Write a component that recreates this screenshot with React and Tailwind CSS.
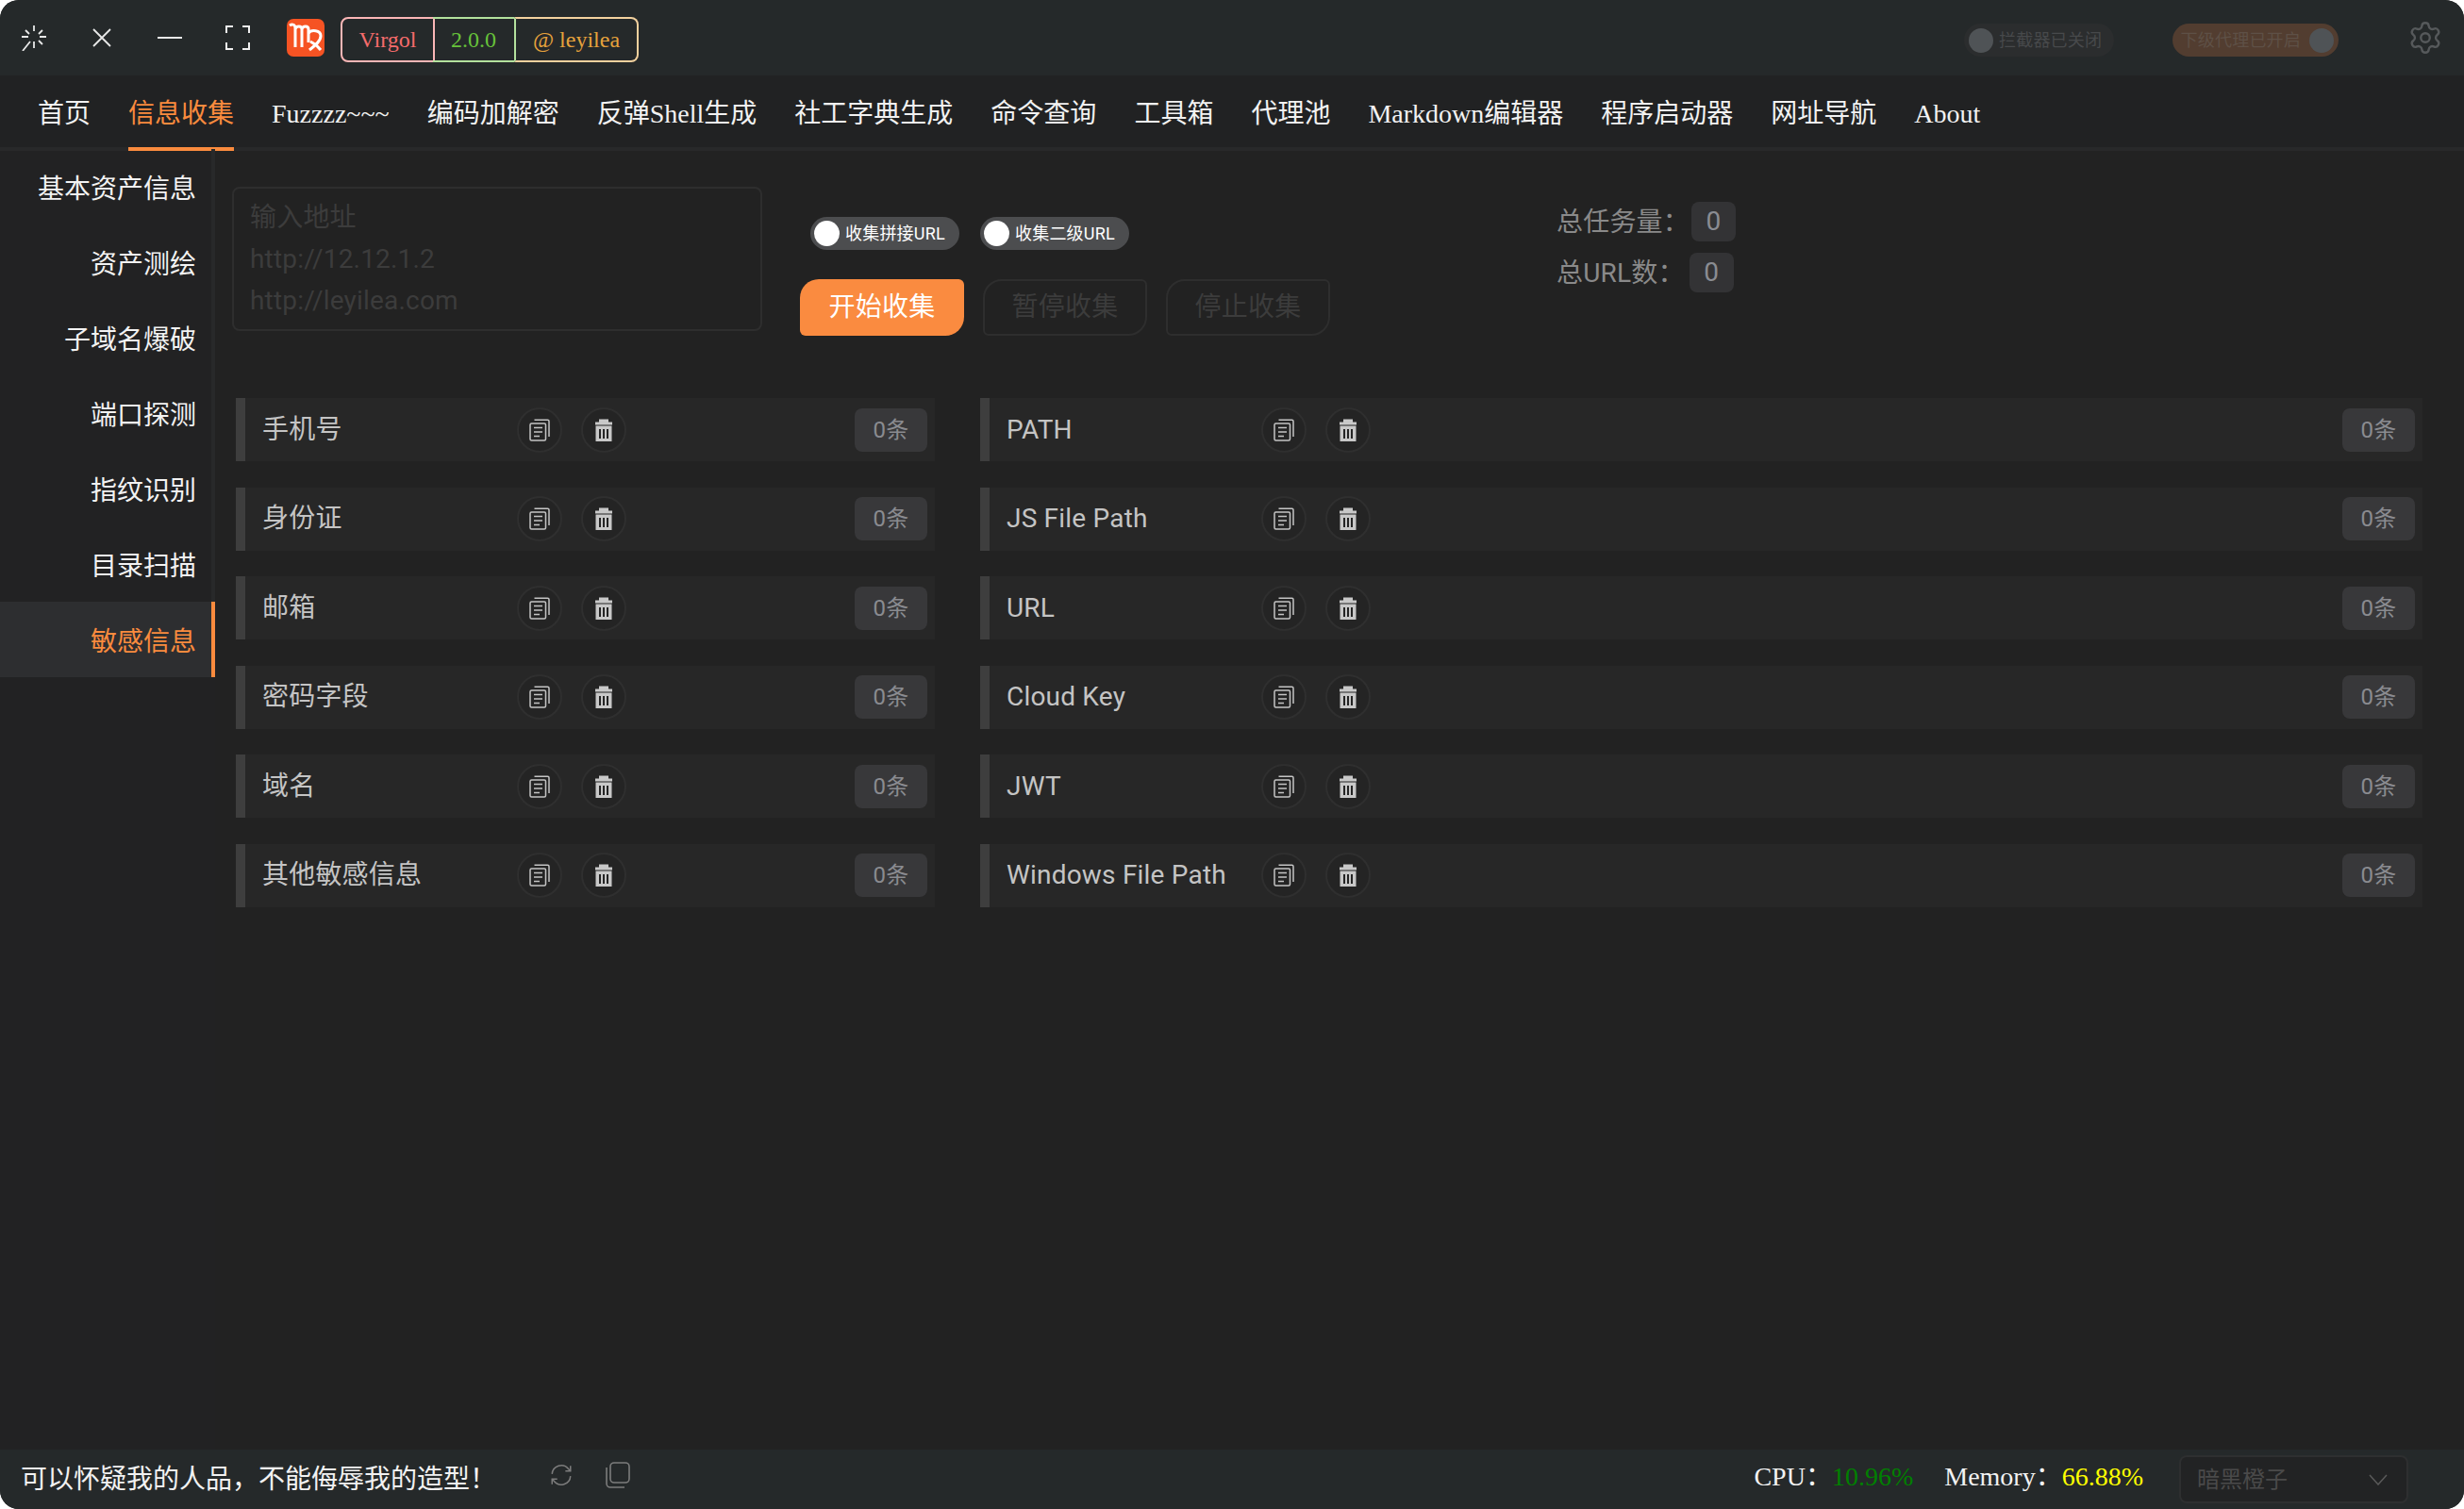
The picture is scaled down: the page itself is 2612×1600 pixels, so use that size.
import { Settings } from 'lucide-react';

const SERIF = "font-['Liberation_Serif','Noto_Sans_CJK_SC',serif]";

const tabs = ['首页', '信息收集', 'Fuzzzz~~~', '编码加解密', '反弹Shell生成', '社工字典生成', '命令查询', '工具箱', '代理池', 'Markdown编辑器', '程序启动器', '网址导航', 'About'];
const sideItems = ['基本资产信息', '资产测绘', '子域名爆破', '端口探测', '指纹识别', '目录扫描', '敏感信息'];
const leftRows = ['手机号', '身份证', '邮箱', '密码字段', '域名', '其他敏感信息'];
const rightRows = ['PATH', 'JS File Path', 'URL', 'Cloud Key', 'JWT', 'Windows File Path'];

function CopyIcon() {
  return (
    <svg viewBox="0 0 22 24" className="w-[22px] h-[24px]" fill="none" stroke="#c4c4c4" strokeWidth="1.5">
      <rect x="1" y="5" width="16.500" height="18" rx="1.500" />
      <path d="M5.500 1.200h14a1.500 1.500 0 0 1 1.500 1.500V19" />
      <path d="M5 9.500h9M5 14h9M5 18.500h6" />
    </svg>
  );
}

function TrashIcon() {
  return (
    <svg viewBox="0 0 18 24" className="w-[18px] h-[24px]">
      <path fill="#c8c8c8" fillRule="evenodd" d="M4 .5h10v3h4v3H0v-3h4zM.5 7.500h17V24H.5zM4 11v10h2V11zM8 11v10h2V11zM12 11v10h2V11z" />
    </svg>
  );
}

function Row({ label }) {
  return (
    <div className="h-[67px] flex items-center bg-[#272727] border-l-[10px] border-[#3e3e3e]">
      <span className="w-[288px] pl-[18px] text-[28px] leading-none text-[#c4c4c4] whitespace-nowrap">{label}</span>
      <div className="flex gap-5">
        <button className="w-12 h-12 rounded-full border-2 border-[#2f2f2f] bg-[#242424] flex items-center justify-center">
          <CopyIcon />
        </button>
        <button className="w-12 h-12 rounded-full border-2 border-[#2f2f2f] bg-[#242424] flex items-center justify-center">
          <TrashIcon />
        </button>
      </div>
      <span className="ml-auto mr-[8px] w-[77px] h-[46px] rounded-lg bg-[#38383a] text-[#8a8b90] text-[24px] flex items-center justify-center">0条</span>
    </div>
  );
}

function Toggle({ label }) {
  return (
    <div className="h-[35px] w-[158px] rounded-full bg-[#4c4d4f] flex items-center pl-1 gap-[6px]">
      <span className="w-[27px] h-[27px] rounded-full bg-white" />
      <span className="text-white text-[18px] leading-none whitespace-nowrap">{label}</span>
    </div>
  );
}

export default function App() {
  return (
    <div className="bg-white w-[2612px] h-[1600px]">
      <div className="h-full rounded-[20px] overflow-hidden flex flex-col bg-[#222223] tracking-[0.2px] font-['Roboto','Noto_Sans_CJK_SC',sans-serif]">
        {/* Title bar */}
        <header className="h-20 shrink-0 bg-[#25292a] flex items-center">
          <div className="flex items-center pl-[23px]">
            <svg viewBox="0 0 26 27" className="w-[26px] h-[27px]" stroke="#e8e8e8" strokeWidth="1.8" fill="none">
              <path d="M13 0v6M13 17v7M4 5l4 4M22 5l-4 4M0 12h7M19 12h7M18 16l4 4M9 17L1 27" />
            </svg>
            <svg viewBox="0 0 20 20" className="ml-[49px] w-5 h-5" stroke="#e8e8e8" strokeWidth="1.8" fill="none">
              <path d="M1 1l18 18M19 1L1 19" />
            </svg>
            <span className="ml-[49px] w-[26px] h-[2px] bg-[#e8e8e8]" />
            <svg viewBox="0 0 26 26" className="ml-[46px] w-[26px] h-[26px]" stroke="#f0f0f0" strokeWidth="2" fill="none">
              <path d="M1 8V1h7M18 1h7v7M25 18v7h-7M8 25H1v-7" />
            </svg>
          </div>
          <div className="ml-[39px] w-10 h-10 rounded-[7px] bg-[#f65323] flex items-center justify-center">
            <svg viewBox="0 0 40 40" className="w-10 h-10" stroke="#fff" strokeWidth="3" fill="none">
              <path d="M3 7c3-2 6-1 6 3v20M9 11c1-4 7-4 7 0v19M16 11c1-4 7-4 7 0v14" />
              <path d="M23 15c3-4 13-3 13 3 0 6-7 11-12 15M25 24c4 2 8 5 11 9" />
            </svg>
          </div>
          <div className={`ml-[17px] mt-1 h-12 flex text-[24px] tracking-normal ${SERIF}`}>
            <span className="w-[100px] flex items-center justify-center border-2 border-[#fab6b6] rounded-l-lg text-[#f56c6c]">Virgol</span>
            <span className="w-[86px] -ml-[2px] flex items-center justify-center border-y-2 border-[#b3e19d] text-[#67c23a]">2.0.0</span>
            <span className="w-[132px] flex items-center justify-center border-2 border-[#f3d19e] rounded-r-lg text-[#e6a23c] border-l-[#b3e19d]">@ leyilea</span>
          </div>
          <div className="ml-auto flex items-center pr-[22px]">
            <div className="mt-[5px] h-[35px] w-[159px] rounded-full bg-[#2b2d2e] flex items-center pl-[5px] gap-[6px]">
              <span className="w-[26px] h-[26px] rounded-full bg-[#4f5356]" />
              <span className="text-[#47494b] text-[18px] leading-none whitespace-nowrap">拦截器已关闭</span>
            </div>
            <div className="mt-[5px] ml-[62px] h-[35px] w-[176px] rounded-full bg-[#523d30] flex items-center justify-end pr-[5px] gap-[9px]">
              <span className="text-[#5e5046] text-[18px] leading-none whitespace-nowrap">下级代理已开启</span>
              <span className="w-[26px] h-[26px] rounded-full bg-[#4f5356]" />
            </div>
            <Settings className="ml-[73px] w-[38px] h-[38px] text-[#56595b]" strokeWidth={1.5} />
          </div>
        </header>

        {/* Tabs */}
        <nav className={`h-20 shrink-0 flex items-stretch gap-10 pl-10 bg-[#212223] border-b-4 border-[#28292a] text-[28px] tracking-normal text-[#f2f2f2] ${SERIF}`}>
          {tabs.map((tab) => (
            tab === '信息收集' ? (
              <span key={tab} className="flex items-center whitespace-nowrap text-[#fa8b3e] border-b-4 border-[#fa8b3e] -mb-1 pt-[5px]">{tab}</span>
            ) : (
              <span key={tab} className="flex items-center whitespace-nowrap pt-[5px]">{tab}</span>
            )
          ))}
        </nav>

        <div className="flex-1 flex min-h-0">
          {/* Side menu */}
          <aside className={`w-[228px] shrink-0 -mt-[2px] text-[28px] tracking-normal text-[#f2f2f2] ${SERIF}`}>
            {sideItems.map((item) => (
              item === '敏感信息' ? (
                <div key={item} className="h-20 flex items-center justify-end pr-4 pt-[6px] bg-[#2d2e30] border-r-4 border-[#fa8b3e] text-[#fa8b3e]">{item}</div>
              ) : (
                <div key={item} className="h-20 flex items-center justify-end pr-4 pt-[6px] border-r-4 border-[#28292a]">{item}</div>
              )
            ))}
          </aside>

          <main className="flex-1 min-w-0 pl-[18px] pt-[38px] bg-[#222222]">
            <div className="flex items-start">
              <textarea
                readOnly
                placeholder={'输入地址\nhttp://12.12.1.2\nhttp://leyilea.com'}
                className="w-[562px] h-[153px] resize-none rounded-lg border-2 border-[#2e2e2e] bg-transparent px-[17px] py-[9px] text-[28px] leading-[44px] outline-none placeholder:text-[#3c3c3c]"
              />
              <div className="ml-10 w-[562px] pt-8">
                <div className="flex gap-[22px] pl-[11px]">
                  <Toggle label="收集拼接URL" />
                  <Toggle label="收集二级URL" />
                </div>
                <div className="flex gap-5 mt-[31px] text-[28px]">
                  <button className="w-[174px] h-[60px] rounded-tl-[20px] rounded-br-[20px] rounded-tr-md rounded-bl-md bg-[#fa8b40] text-white">开始收集</button>
                  <button className="w-[174px] h-[60px] rounded-tl-[20px] rounded-br-[20px] rounded-tr-md rounded-bl-md border-2 border-[#2e2e2e] text-[#3c3c3c]">暂停收集</button>
                  <button className="w-[174px] h-[60px] rounded-tl-[20px] rounded-br-[20px] rounded-tr-md rounded-bl-md border-2 border-[#2e2e2e] text-[#3c3c3c]">停止收集</button>
                </div>
              </div>
              <div className="ml-[240px] pt-4 flex flex-col gap-3 text-[28px] leading-none text-[#8a8a8a]">
                <div className="h-[42px] flex items-center gap-[2px]">
                  <span className="pt-[2px]">{'总任务量\uFF1A'}</span>
                  <span className="w-[47px] h-[42px] rounded-lg bg-[#333335] text-[#8a8c92] flex items-center justify-center">0</span>
                </div>
                <div className="h-[42px] flex items-center gap-[5px]">
                  <span className="pt-[2px]">{'总URL数\uFF1A'}</span>
                  <span className="w-[47px] h-[42px] rounded-lg bg-[#333335] text-[#8a8c92] flex items-center justify-center">0</span>
                </div>
              </div>
            </div>

            <div className="flex gap-12 pl-[4px] pr-[44px] mt-[66px]">
              <div className="w-[741px] flex flex-col gap-[27.5px]">
                {leftRows.map((r) => <Row key={r} label={r} />)}
              </div>
              <div className="flex-1 flex flex-col gap-[27.5px]">
                {rightRows.map((r) => <Row key={r} label={r} />)}
              </div>
            </div>
          </main>
        </div>

        {/* Footer */}
        <footer className={`h-[63px] shrink-0 bg-[#25292a] flex items-center pl-[22px] text-[28px] tracking-normal text-[#f2f2f2] ${SERIF}`}>
          <span className="whitespace-nowrap">{'可以怀疑我的人品\uFF0C不能侮辱我的造型\uFF01'}</span>
          <svg viewBox="0 0 24 24" className="ml-[56px] mb-[9px] w-[26px] h-[26px]" fill="none" stroke="#7c7c7c" strokeWidth="1.4">
            <path d="M3 11a9 9 0 0 1 16-5l2 2M21 13a9 9 0 0 1-16 5l-2-2" />
            <path d="M21 3v5h-5M3 21v-5h5" />
          </svg>
          <svg viewBox="0 0 28 28" className="ml-[32px] mb-[9px] w-7 h-7" fill="none" stroke="#7c7c7c" strokeWidth="1.6">
            <rect x="7" y="1" width="20" height="21" rx="4" />
            <path d="M3 6v17a4 4 0 0 0 4 4h15" />
          </svg>
          <div className="ml-auto flex items-center pr-[59px]">
            <span className="mb-[5px]">{'CPU\uFF1A'}</span>
            <span className="mb-[5px] text-[#008000]">10.96%</span>
            <span className="mb-[5px] ml-[33px]">{'Memory\uFF1A'}</span>
            <span className="mb-[5px] text-[#ffff00]">66.88%</span>
            <div className="ml-[38px] w-[243px] h-[51px] rounded-lg border-2 border-[#2e2f30] bg-[#222324] flex items-center justify-between pl-[17px] pr-[20px] text-[24px] text-[#4a4a4a]">
              <span>暗黑橙子</span>
              <svg viewBox="0 0 20 12" className="w-5 h-3" fill="none" stroke="#5a5a5a" strokeWidth="1.5">
                <path d="M1 1l9 10 9-10" />
              </svg>
            </div>
          </div>
        </footer>
      </div>
    </div>
  );
}
